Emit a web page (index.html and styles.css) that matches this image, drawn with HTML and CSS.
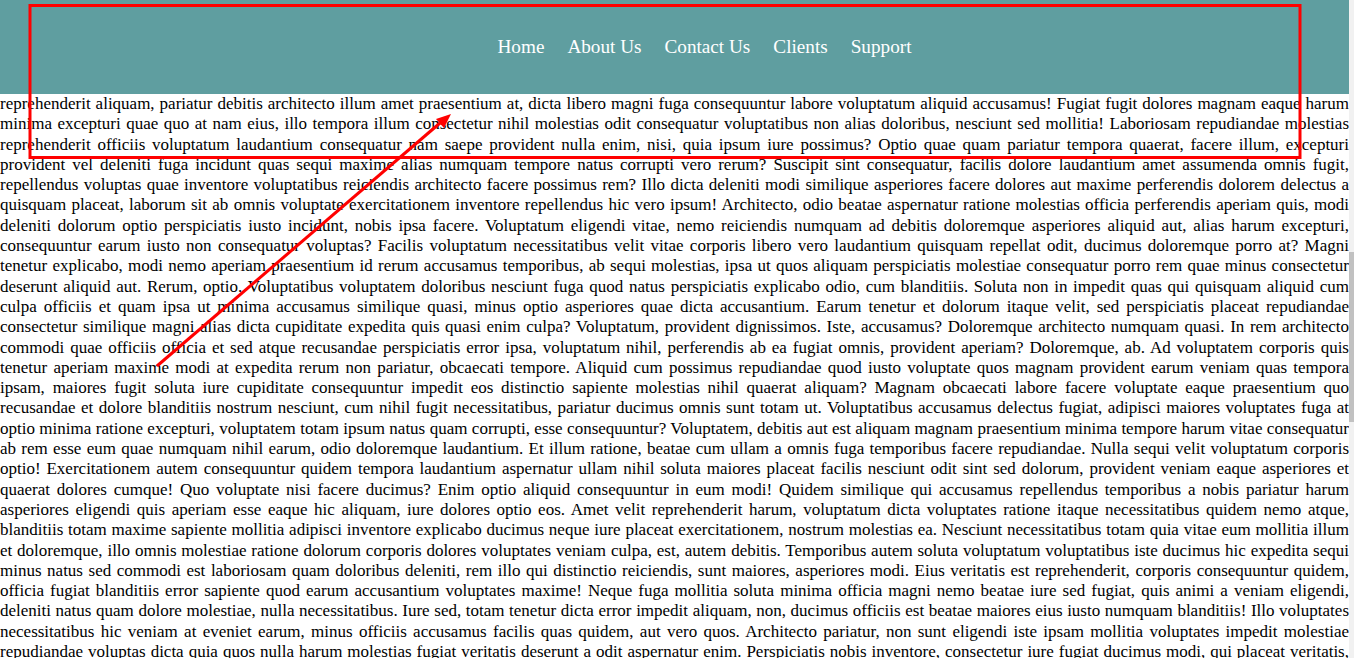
FILE: index.html
```html
<!DOCTYPE html>
<html lang="en">
<head>
<meta charset="utf-8">
<title>Page</title>
<link rel="stylesheet" href="styles.css">
</head>
<body>
<div class="viewport">
  <div class="page">
    <header class="site-header">
      <nav class="nav">
        <a href="#" class="nav-link">Home</a>
        <a href="#" class="nav-link">About Us</a>
        <a href="#" class="nav-link">Contact Us</a>
        <a href="#" class="nav-link">Clients</a>
        <a href="#" class="nav-link">Support</a>
      </nav>
    </header>
    <main class="content">
      <p class="text">
        <span class="line">reprehenderit aliquam, pariatur debitis architecto illum amet praesentium at, dicta libero magni fuga consequuntur labore voluptatum aliquid accusamus! Fugiat fugit dolores magnam eaque harum</span>
        <span class="line">minima excepturi quae quo at nam eius, illo tempora illum consectetur nihil molestias odit consequatur voluptatibus non alias doloribus, nesciunt sed mollitia! Laboriosam repudiandae molestias</span>
        <span class="line">reprehenderit officiis voluptatum laudantium consequatur nam saepe provident nulla enim, nisi, quia ipsum iure possimus? Optio quae quam pariatur tempora quaerat, facere illum, excepturi</span>
        <span class="line">provident vel deleniti fuga incidunt quas sequi maxime alias numquam tempore natus corrupti vero rerum? Suscipit sint consequatur, facilis dolore laudantium amet assumenda omnis fugit,</span>
        <span class="line">repellendus voluptas quae inventore voluptatibus reiciendis architecto facere possimus rem? Illo dicta deleniti modi similique asperiores facere dolores aut maxime perferendis dolorem delectus a</span>
        <span class="line">quisquam placeat, laborum sit ab omnis voluptate exercitationem inventore repellendus hic vero ipsum! Architecto, odio beatae aspernatur ratione molestias officia perferendis aperiam quis, modi</span>
        <span class="line">deleniti dolorum optio perspiciatis iusto incidunt, nobis ipsa facere. Voluptatum eligendi vitae, nemo reiciendis numquam ad debitis doloremque asperiores aliquid aut, alias harum excepturi,</span>
        <span class="line">consequuntur earum iusto non consequatur voluptas? Facilis voluptatum necessitatibus velit vitae corporis libero vero laudantium quisquam repellat odit, ducimus doloremque porro at? Magni</span>
        <span class="line">tenetur explicabo, modi nemo aperiam praesentium id rerum accusamus temporibus, ab sequi molestias, ipsa ut quos aliquam perspiciatis molestiae consequatur porro rem quae minus consectetur</span>
        <span class="line">deserunt aliquid aut. Rerum, optio. Voluptatibus voluptatem doloribus nesciunt fuga quod natus perspiciatis explicabo odio, cum blanditiis. Soluta non in impedit quas qui quisquam aliquid cum</span>
        <span class="line">culpa officiis et quam ipsa ut minima accusamus similique quasi, minus optio asperiores quae dicta accusantium. Earum tenetur et dolorum itaque velit, sed perspiciatis placeat repudiandae</span>
        <span class="line">consectetur similique magni alias dicta cupiditate expedita quis quasi enim culpa? Voluptatum, provident dignissimos. Iste, accusamus? Doloremque architecto numquam quasi. In rem architecto</span>
        <span class="line">commodi quae officiis officia et sed atque recusandae perspiciatis error ipsa, voluptatum nihil, perferendis ab ea fugiat omnis, provident aperiam? Doloremque, ab. Ad voluptatem corporis quis</span>
        <span class="line">tenetur aperiam maxime modi at expedita rerum non pariatur, obcaecati tempore. Aliquid cum possimus repudiandae quod iusto voluptate quos magnam provident earum veniam quas tempora</span>
        <span class="line">ipsam, maiores fugit soluta iure cupiditate consequuntur impedit eos distinctio sapiente molestias nihil quaerat aliquam? Magnam obcaecati labore facere voluptate eaque praesentium quo</span>
        <span class="line">recusandae et dolore blanditiis nostrum nesciunt, cum nihil fugit necessitatibus, pariatur ducimus omnis sunt totam ut. Voluptatibus accusamus delectus fugiat, adipisci maiores voluptates fuga at</span>
        <span class="line">optio minima ratione excepturi, voluptatem totam ipsum natus quam corrupti, esse consequuntur? Voluptatem, debitis aut est aliquam magnam praesentium minima tempore harum vitae consequatur</span>
        <span class="line">ab rem esse eum quae numquam nihil earum, odio doloremque laudantium. Et illum ratione, beatae cum ullam a omnis fuga temporibus facere repudiandae. Nulla sequi velit voluptatum corporis</span>
        <span class="line">optio! Exercitationem autem consequuntur quidem tempora laudantium aspernatur ullam nihil soluta maiores placeat facilis nesciunt odit sint sed dolorum, provident veniam eaque asperiores et</span>
        <span class="line">quaerat dolores cumque! Quo voluptate nisi facere ducimus? Enim optio aliquid consequuntur in eum modi! Quidem similique qui accusamus repellendus temporibus a nobis pariatur harum</span>
        <span class="line">asperiores eligendi quis aperiam esse eaque hic aliquam, iure dolores optio eos. Amet velit reprehenderit harum, voluptatum dicta voluptates ratione itaque necessitatibus quidem nemo atque,</span>
        <span class="line">blanditiis totam maxime sapiente mollitia adipisci inventore explicabo ducimus neque iure placeat exercitationem, nostrum molestias ea. Nesciunt necessitatibus totam quia vitae eum mollitia illum</span>
        <span class="line">et doloremque, illo omnis molestiae ratione dolorum corporis dolores voluptates veniam culpa, est, autem debitis. Temporibus autem soluta voluptatum voluptatibus iste ducimus hic expedita sequi</span>
        <span class="line">minus natus sed commodi est laboriosam quam doloribus deleniti, rem illo qui distinctio reiciendis, sunt maiores, asperiores modi. Eius veritatis est reprehenderit, corporis consequuntur quidem,</span>
        <span class="line">officia fugiat blanditiis error sapiente quod earum accusantium voluptates maxime! Neque fuga mollitia soluta minima officia magni nemo beatae iure sed fugiat, quis animi a veniam eligendi,</span>
        <span class="line">deleniti natus quam dolore molestiae, nulla necessitatibus. Iure sed, totam tenetur dicta error impedit aliquam, non, ducimus officiis est beatae maiores eius iusto numquam blanditiis! Illo voluptates</span>
        <span class="line">necessitatibus hic veniam at eveniet earum, minus officiis accusamus facilis quas quidem, aut vero quos. Architecto pariatur, non sunt eligendi iste ipsam mollitia voluptates impedit molestiae</span>
        <span class="line">repudiandae voluptas dicta quia quos nulla harum molestias fugiat veritatis deserunt a odit aspernatur enim. Perspiciatis nobis inventore, consectetur iure fugiat ducimus modi, qui placeat veritatis,</span>
      </p>
    </main>
  </div>
  <div class="scrollbar"><div class="scroll-thumb"></div></div>
</div>
<svg class="annotation" width="1354" height="658" viewBox="0 0 1354 658" aria-hidden="true">
  <rect x="30" y="5.5" width="1270" height="152" fill="none" stroke="#ff0000" stroke-width="3"/>
  <line x1="157" y1="366" x2="440" y2="123" stroke="#ff0000" stroke-width="3"/>
  <polygon points="451,114 436,119 444,128" fill="#ff0000"/>
</svg>
</body>
</html>
```

FILE: styles.css
```css
html, body {
  margin: 0;
  padding: 0;
  height: 100%;
  overflow: hidden;
  background: #ffffff;
}

body {
  font-family: "Liberation Serif", "Times New Roman", serif;
  color: #000000;
  position: relative;
}

.viewport {
  display: flex;
  height: 100vh;
}

.page {
  flex: 1;
  min-width: 0;
  overflow: hidden;
}

.site-header {
  height: 94px;
  background: #5f9ea0;
  display: flex;
  align-items: center;
  justify-content: center;
  padding-left: 60px;
}

.nav {
  display: flex;
  gap: 23px;
}

.nav-link {
  color: #ffffff;
  text-decoration: none;
  font-size: 19.2px;
}

.content {
  margin: 0;
}

.text {
  margin: 0;
  font-size: 17px;
  line-height: 20.3px;
  text-align: justify;
}

.line {
  display: block;
  text-align: justify;
  text-align-last: justify;
  white-space: nowrap;
}

.scrollbar {
  width: 5px;
  background: #f1f1f1;
  display: flex;
  flex-direction: column;
}

.scroll-thumb {
  margin-top: 252px;
  height: 170px;
  background: #c1c1c1;
}

.annotation {
  position: absolute;
  top: 0;
  left: 0;
  pointer-events: none;
}
```
